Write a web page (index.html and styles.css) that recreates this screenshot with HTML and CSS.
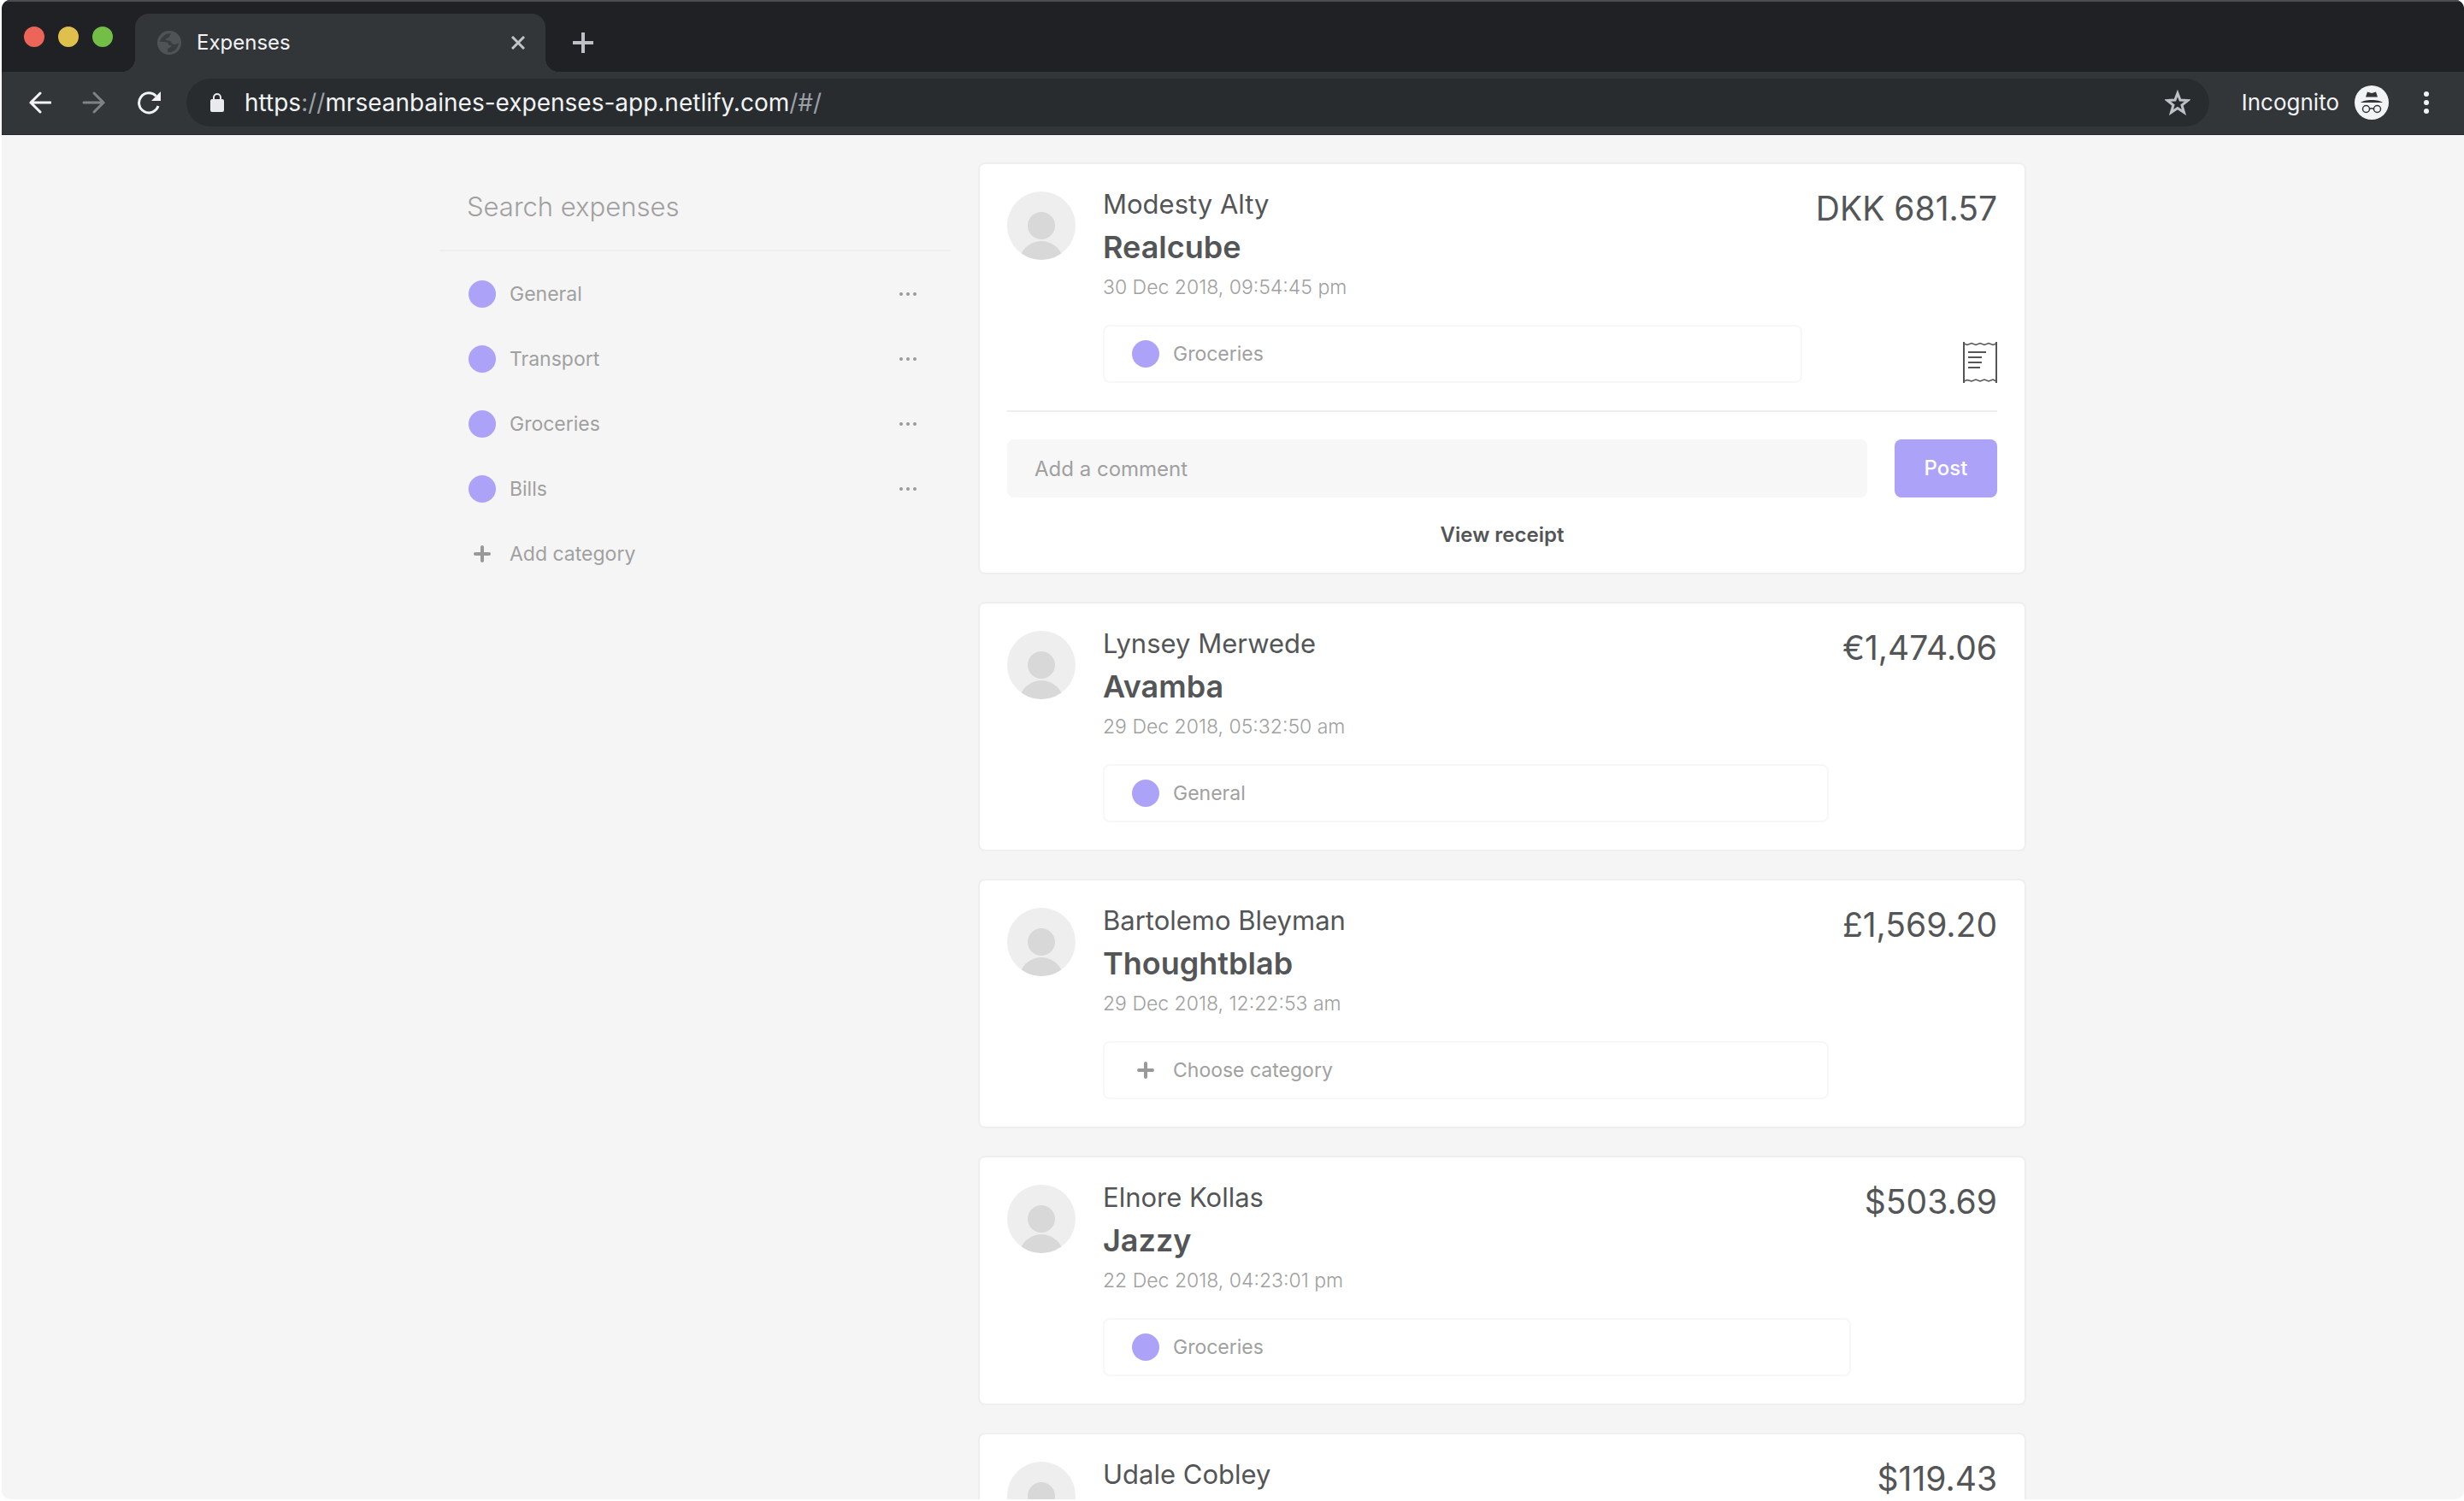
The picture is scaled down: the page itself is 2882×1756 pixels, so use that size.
FILE: index.html
```html
<!DOCTYPE html>
<html lang="en">
<head>
<meta charset="utf-8">
<title>Expenses</title>
<link rel="stylesheet" href="styles.css">
</head>
<body>
<div class="window">
  <header class="browser">
    <div class="tabstrip">
      <div class="lights">
        <span class="light light-close"></span>
        <span class="light light-min"></span>
        <span class="light light-max"></span>
      </div>
      <div class="tab">
        <svg class="favicon" viewBox="0 0 28 28" aria-hidden="true"><circle cx="14" cy="14" r="14" fill="#505356"/><path d="M16 3C9 3 4 8 3 13c4 0 8 0 9 1 1 1 1 3 3 3 2 0 2 1 1 2-2 1-4 1-4 3v3c6 1 12-3 13-11-2 1-3 2-5 2-3 0-3-3-5-4-1-1-5 0-5-2s4-1 4-3c0-2 2-2 2-4z" fill="#383c3f"/></svg>
        <span class="tab-title">Expenses</span>
        <button class="icon-button" aria-label="Close tab"><svg width="16" height="16" viewBox="0 0 16 16"><path d="M1 1l14 14M15 1L1 15" stroke="#c3c5c7" stroke-width="3"/></svg></button>
      </div>
      <button class="icon-button" aria-label="New tab"><svg width="24" height="24" viewBox="0 0 24 24"><path d="M12 0v24M0 12h24" stroke="#bdc0c4" stroke-width="4"/></svg></button>
    </div>
    <div class="toolbar">
      <div class="nav">
        <button class="icon-button" aria-label="Back"><svg width="28" height="28" viewBox="0 0 28 28"><path d="M27 14H4M15 3L4 14l11 11" fill="none" stroke="#f1f3f4" stroke-width="3" stroke-linecap="round"/></svg></button>
        <button class="icon-button" aria-label="Forward"><svg width="28" height="28" viewBox="0 0 28 28"><path d="M2 14h23M14 3l11 11-11 11" fill="none" stroke="#808386" stroke-width="3" stroke-linecap="round"/></svg></button>
        <button class="icon-button" aria-label="Reload"><svg width="28" height="28" viewBox="0 0 28 28"><path d="M25 18A11.500 11.500 0 1 1 22.500 6.500" fill="none" stroke="#f1f3f4" stroke-width="3"/><path d="M28 1v11H17z" fill="#f1f3f4"/></svg></button>
      </div>
      <div class="omnibox">
        <svg class="lock" viewBox="0 0 16 22" aria-hidden="true"><rect y="7" width="16" height="15" rx="2" fill="#e8eaed"/><path d="M4 8V5a4 4 0 0 1 8 0v3" fill="none" stroke="#e8eaed" stroke-width="2"/></svg>
        <span class="url">https<span class="dim">://</span>mrseanbaines-expenses-app.netlify.com<span class="dim">/#/</span></span>
        <button class="icon-button" aria-label="Bookmark"><svg width="30" height="30" viewBox="0 0 30 30"><path d="M15 4l3 8 9 .5-7 5.500 2.500 8.500-7.500-5-7.500 5L10 18l-7-5.500 9-.5z" fill="none" stroke="#bdc1c6" stroke-width="3"/></svg></button>
      </div>
      <div class="incognito">
        <span>Incognito</span>
        <svg width="40" height="40" viewBox="0 0 40 40" aria-hidden="true"><circle cx="20" cy="20" r="20" fill="#f1f3f4"/><path d="M15 7.500l5 1.500 5-1.500 2 6H13zM7 20c3-2 6-3 13-3s10 1 13 3z" fill="#323639"/><g fill="none" stroke="#323639" stroke-width="1.500"><circle cx="13.500" cy="27.500" r="4"/><circle cx="26.500" cy="27.500" r="4"/><path d="M17.500 27.500q2.500-1.500 5 0"/></g></svg>
      </div>
      <button class="icon-button menu" aria-label="Menu"><svg width="6" height="26" viewBox="0 0 6 26" fill="#f1f3f4"><circle cx="3" cy="3" r="3"/><circle cx="3" cy="13" r="3"/><circle cx="3" cy="23" r="3"/></svg></button>
    </div>
  </header>

  <svg class="defs" width="0" height="0" aria-hidden="true">
    <symbol id="avatar" viewBox="0 0 80 80"><clipPath id="disc"><circle cx="40" cy="40" r="40"/></clipPath><circle cx="40" cy="40" r="40" fill="#eee"/><g clip-path="url(#disc)" fill="#d8d8d8"><circle cx="40" cy="40" r="16"/><circle cx="40" cy="84" r="26"/></g></symbol>
    <symbol id="plus" viewBox="0 0 32 32"><path d="M16 8v16M8 16h16" stroke="#999" stroke-width="4" stroke-linecap="round"/></symbol>
    <symbol id="more" viewBox="0 0 20 4"><g fill="#999"><circle cx="2" cy="2" r="2"/><circle cx="10" cy="2" r="2"/><circle cx="18" cy="2" r="2"/></g></symbol>
    <symbol id="receipt" viewBox="0 0 40 48"><g fill="none" stroke="#555" stroke-width="2"><path d="M1 0v48M39 0v48"/><path stroke-width="1.500" d="M1 2l4 1.500 5-2 5 2 5-2 5 2 5-2 5 2 4-1.500M1 46l4-1.500 5 1.500 5-2 5 2 5-2 5 2 5-2 4 2"/><path d="M6 12h21M6 18h16M6 24h16M6 30h14"/></g></symbol>
  </svg>

  <main class="app">
    <aside class="sidebar">
      <input class="search" type="search" placeholder="Search expenses" aria-label="Search expenses">
      <ul class="categories">
        <li class="category"><span class="dot"></span><span class="label">General</span><button class="icon-button" aria-label="General options"><svg width="20" height="4"><use href="#more"/></svg></button></li>
        <li class="category"><span class="dot"></span><span class="label">Transport</span><button class="icon-button" aria-label="Transport options"><svg width="20" height="4"><use href="#more"/></svg></button></li>
        <li class="category"><span class="dot"></span><span class="label">Groceries</span><button class="icon-button" aria-label="Groceries options"><svg width="20" height="4"><use href="#more"/></svg></button></li>
        <li class="category"><span class="dot"></span><span class="label">Bills</span><button class="icon-button" aria-label="Bills options"><svg width="20" height="4"><use href="#more"/></svg></button></li>
        <li><button class="category add"><svg width="32" height="32"><use href="#plus"/></svg><span class="label">Add category</span></button></li>
      </ul>
    </aside>

    <section class="expenses">
      <article class="card">
        <div class="summary">
          <svg class="avatar" aria-hidden="true"><use href="#avatar"/></svg>
          <div class="details">
            <p class="name">Modesty Alty</p>
            <h2 class="merchant">Realcube</h2>
            <p class="date">30 Dec 2018, 09:54:45 pm</p>
            <button class="picker"><span class="dot"></span>Groceries</button>
          </div>
          <div class="side">
            <p class="amount">DKK 681.57</p>
            <svg width="40" height="48" aria-hidden="true"><use href="#receipt"/></svg>
          </div>
        </div>
        <form class="comment">
          <input class="comment-input" type="text" placeholder="Add a comment" aria-label="Add a comment">
          <button class="post" type="button">Post</button>
        </form>
        <a class="view-receipt" href="#/">View receipt</a>
      </article>

      <article class="card">
        <div class="summary">
          <svg class="avatar" aria-hidden="true"><use href="#avatar"/></svg>
          <div class="details">
            <p class="name">Lynsey Merwede</p>
            <h2 class="merchant">Avamba</h2>
            <p class="date">29 Dec 2018, 05:32:50 am</p>
            <button class="picker"><span class="dot"></span>General</button>
          </div>
          <div class="side"><p class="amount">€1,474.06</p></div>
        </div>
      </article>

      <article class="card">
        <div class="summary">
          <svg class="avatar" aria-hidden="true"><use href="#avatar"/></svg>
          <div class="details">
            <p class="name">Bartolemo Bleyman</p>
            <h2 class="merchant">Thoughtblab</h2>
            <p class="date">29 Dec 2018, 12:22:53 am</p>
            <button class="picker"><svg width="32" height="32" aria-hidden="true"><use href="#plus"/></svg>Choose category</button>
          </div>
          <div class="side"><p class="amount">£1,569.20</p></div>
        </div>
      </article>

      <article class="card">
        <div class="summary">
          <svg class="avatar" aria-hidden="true"><use href="#avatar"/></svg>
          <div class="details">
            <p class="name">Elnore Kollas</p>
            <h2 class="merchant">Jazzy</h2>
            <p class="date">22 Dec 2018, 04:23:01 pm</p>
            <button class="picker"><span class="dot"></span>Groceries</button>
          </div>
          <div class="side"><p class="amount">$503.69</p></div>
        </div>
      </article>

      <article class="card">
        <div class="summary">
          <svg class="avatar" aria-hidden="true"><use href="#avatar"/></svg>
          <div class="details">
            <p class="name">Udale Cobley</p>
          </div>
          <div class="side"><p class="amount">$119.43</p></div>
        </div>
      </article>
    </section>
  </main>
</div>
</body>
</html>
```
FILE: styles.css
```css
* {
  box-sizing: border-box;
}

body {
  margin: 0;
  padding: 0 0 2px 2px;
  height: 100vh;
  overflow: hidden;
  background: #fff;
  color: #545557;
  font-family: "Inter", "Roboto", sans-serif;
  font-size: 24px;
  line-height: 24px;
}

p, h2, ul {
  margin: 0;
  padding: 0;
  list-style: none;
}

button, input {
  font: inherit;
  border: 0;
  outline: 0;
}

svg {
  display: block;
  flex: none;
}

.defs {
  position: absolute;
}

.window {
  display: flex;
  flex-direction: column;
  height: 100%;
  overflow: hidden;
  border-radius: 10px;
  background: #f5f5f5;
}

/* Browser chrome */

.browser {
  flex: none;
  border-bottom: 1px solid #25282a;
  background: #323639;
}

.tabstrip {
  display: flex;
  align-items: center;
  height: 84px;
  padding: 14px 26px 0;
  border-top: 2px solid #4c4d4f;
  background: #202124;
}

.lights {
  display: flex;
  gap: 16px;
  margin: 0 26px 14px 0;
}

.light {
  width: 24px;
  height: 24px;
  border-radius: 50%;
}

.light-close { background: #ed6559; }
.light-min { background: #e0c04d; }
.light-max { background: #72be47; }

.tab {
  position: relative;
  display: flex;
  align-items: center;
  gap: 18px;
  width: 480px;
  height: 68px;
  margin-right: 32px;
  padding: 0 24px 0 26px;
  border-radius: 16px 16px 0 0;
  background: #323639;
}

.tab::before,
.tab::after {
  content: "";
  position: absolute;
  bottom: 0;
  width: 16px;
  height: 16px;
}

.tab::before {
  right: 100%;
  background: radial-gradient(circle at 0 0, #202124 16px, #323639 16px);
}

.tab::after {
  left: 100%;
  background: radial-gradient(circle at 100% 0, #202124 16px, #323639 16px);
}

.favicon {
  width: 28px;
  height: 28px;
}

.tab-title {
  flex: 1;
  color: #f1f3f4;
}

.icon-button {
  display: flex;
  padding: 0;
  background: none;
}

.toolbar {
  display: flex;
  align-items: center;
  height: 73px;
  padding: 0 41px 2px 30px;
}

.nav {
  display: flex;
  gap: 36px;
}

.omnibox {
  display: flex;
  align-items: center;
  flex: 1;
  gap: 24px;
  height: 56px;
  margin: 0 38px 0 30px;
  padding: 0 22px 0 28px;
  border-radius: 28px;
  background: #282c2f;
}

.lock {
  width: 16px;
  height: 22px;
}

.url {
  flex: 1;
  color: #f1f3f4;
  font-size: 28px;
}

.dim {
  color: #9aa0a6;
}

.incognito {
  display: flex;
  align-items: center;
  gap: 18px;
  color: #f1f3f4;
  font-size: 26px;
}

.menu {
  margin-left: 41px;
}

/* Application */

.app {
  display: grid;
  grid-template-columns: minmax(0, 598px) minmax(0, 1fr);
  align-items: start;
  gap: 32px;
  width: 100%;
  max-width: 1920px;
  margin: 0 auto;
  padding: 32px;
}

.search {
  width: 100%;
  height: 104px;
  padding: 0 32px;
  border-bottom: 2px solid #eee;
  background: none;
  font-size: 31px;
  font-weight: 300;
}

.search::placeholder,
.comment-input::placeholder {
  color: #a0a0a0;
  opacity: 1;
}

.categories {
  display: grid;
  gap: 8px;
  padding-top: 16px;
}

.category {
  display: flex;
  align-items: center;
  gap: 16px;
  width: 100%;
  height: 68px;
  padding: 0 40px 0 34px;
  color: #a0a0a0;
  font-size: 23px;
}

.add {
  background: none;
  text-align: left;
}

.label {
  flex: 1;
}

.dot {
  flex: none;
  width: 32px;
  height: 32px;
  border-radius: 50%;
  background: #aca3f9;
}

.expenses {
  display: grid;
  gap: 32px;
}

.card {
  padding: 32px;
  border: 2px solid #eee;
  border-radius: 8px;
  background: #fff;
}

.summary {
  display: flex;
}

.avatar {
  width: 80px;
  height: 80px;
  margin-right: 32px;
}

.details {
  flex: 1;
  margin-right: 16px;
}

.name {
  margin-bottom: 16px;
  font-size: 31px;
  line-height: 30px;
}

.merchant {
  margin-bottom: 16px;
  font-size: 36px;
  font-weight: 600;
  line-height: 38px;
}

.date {
  margin-bottom: 32px;
  color: #a0a0a0;
  font-size: 23px;
  font-weight: 300;
}

.picker {
  display: flex;
  align-items: center;
  gap: 16px;
  width: 100%;
  height: 68px;
  padding: 0 32px;
  border: 2px solid #f7f7f7;
  border-radius: 8px;
  background: #fff;
  color: #a0a0a0;
  font-size: 23px;
}

.side {
  display: flex;
  flex-direction: column;
  align-items: flex-end;
  justify-content: space-between;
}

.amount {
  font-size: 39px;
  line-height: 40px;
}

.comment {
  display: flex;
  gap: 32px;
  margin: 32px 0;
  padding-top: 32px;
  border-top: 2px solid #eee;
}

.comment-input {
  flex: 1;
  height: 68px;
  padding: 0 32px;
  border-radius: 8px;
  background: #f7f7f7;
}

.post {
  width: 120px;
  height: 68px;
  border-radius: 8px;
  background: #aca3f9;
  color: #fff;
  font-weight: 500;
}

.view-receipt {
  display: block;
  color: #545557;
  font-weight: 600;
  text-align: center;
  text-decoration: none;
}
```
